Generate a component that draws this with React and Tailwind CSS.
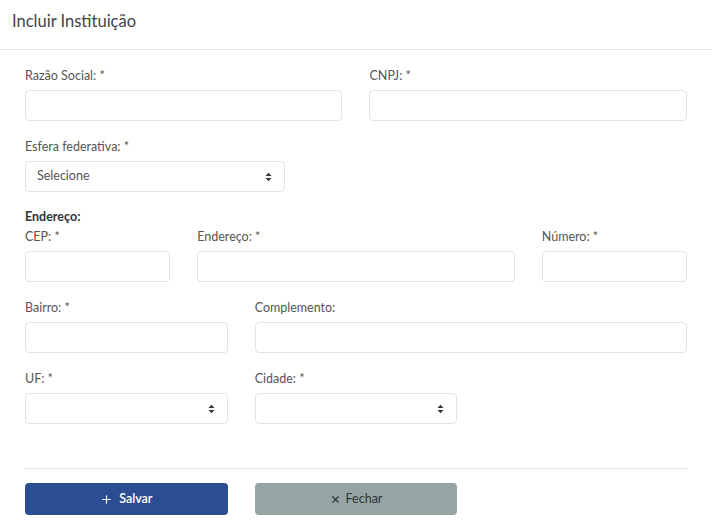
import { Plus, X } from 'lucide-react';

const font = { fontFamily: 'Lato, "Liberation Sans", sans-serif' };

function Label({ children }) {
  return <div className="text-[12.5px] leading-[16px] pt-[2px] mb-[6px] text-[#555]">{children}</div>;
}

function Input() {
  return <div className="h-[31px] w-full rounded-[4px] border border-[#e3e3e3] bg-white" />;
}

function SortArrows() {
  return (
    <svg width="7" height="10" viewBox="0 0 7 10" className="text-[#333]">
      <path d="M0.5 4 L3.5 0.8 L6.5 4 Z" fill="currentColor" />
      <path d="M0.5 6 L3.5 9.2 L6.5 6 Z" fill="currentColor" />
    </svg>
  );
}

function Select({ placeholder }) {
  return (
    <div className="h-[31px] w-full rounded-[4px] border border-[#e3e3e3] bg-white flex items-center justify-between pl-[11px] pr-[12px]">
      <span className="text-[12.5px] text-[#555]">{placeholder}</span>
      <SortArrows />
    </div>
  );
}

function Field({ label, span, select, placeholder }) {
  return (
    <div className={span}>
      <Label>{label}</Label>
      {select ? <Select placeholder={placeholder} /> : <Input />}
    </div>
  );
}

export default function App() {
  return (
    <div className="w-[712px] h-[525px] bg-white overflow-hidden" style={font}>
      <div className="h-[50px] border-b border-[#e2e2e2] flex items-center px-[12px]">
        <h1 className="text-[16.5px] text-[#444] font-normal pb-[7px]">Incluir Instituição</h1>
      </div>

      <div className="px-[25px] pt-[16px]">
        <div className="grid grid-cols-12 gap-x-[27px] gap-y-[16px]">
          <Field label="Razão Social: *" span="col-span-6" />
          <Field label="CNPJ: *" span="col-span-6" />

          <Field label="Esfera federativa: *" span="col-span-5" select placeholder="Selecione" />
          <div className="col-span-7" />
        </div>

        <div className="mt-[16px] text-[12.5px] leading-[16px] pt-[1px] font-bold text-[#333]">Endereço:</div>
        <div className="grid grid-cols-12 gap-x-[27px] gap-y-[16px] mt-[2px]">
          <Field label="CEP: *" span="col-span-3" />
          <Field label="Endereço: *" span="col-span-6" />
          <Field label="Número: *" span="col-span-3" />

          <Field label="Bairro: *" span="col-span-4" />
          <Field label="Complemento:" span="col-span-8" />

          <Field label="UF: *" span="col-span-4" select />
          <Field label="Cidade: *" span="col-span-4" select />
        </div>

        <div className="mt-[44px] border-t border-[#e2e2e2]" />

        <div className="grid grid-cols-12 gap-x-[27px] mt-[14px]">
          <button className="col-span-4 h-[32px] rounded-[4px] bg-[#2b4e93] text-white text-[12.5px] font-semibold flex items-center justify-center gap-[6px]">
            <Plus size={13} strokeWidth={2} />
            Salvar
          </button>
          <button className="col-span-4 h-[32px] rounded-[4px] bg-[#95a5a6] text-[#333] text-[12.5px] flex items-center justify-center gap-[5px]">
            <X size={11} strokeWidth={2.5} />
            Fechar
          </button>
        </div>
      </div>
    </div>
  );
}
